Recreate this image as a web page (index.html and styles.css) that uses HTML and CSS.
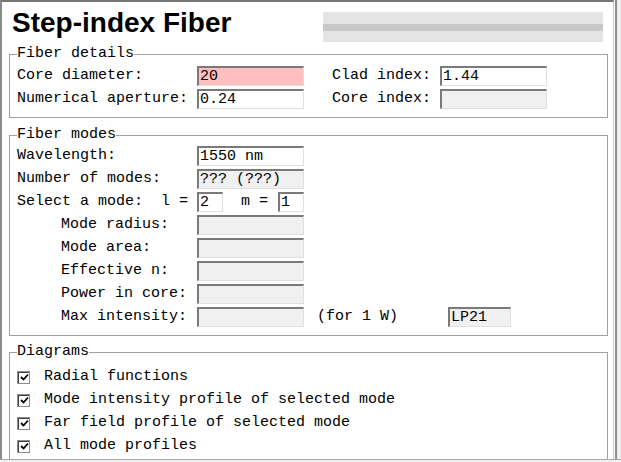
FILE: index.html
```html
<!DOCTYPE html>
<html>
<head>
<meta charset="utf-8">
<title>Step-index Fiber</title>
<link rel="stylesheet" href="styles.css">
</head>
<body>
<div class="screen">
  <div class="frame">
    <header class="head">
      <h1 class="title">Step-index Fiber</h1>
      <div class="bar"></div>
    </header>

    <fieldset class="group g-details">
      <legend class="legend">Fiber details</legend>
      <div class="details">
        <label class="lbl">Core diameter:</label>
        <input class="field warn" type="text" value="20">
        <label class="lbl lbl-right">Clad index:</label>
        <input class="field" type="text" value="1.44">
        <label class="lbl">Numerical aperture:</label>
        <input class="field" type="text" value="0.24">
        <label class="lbl lbl-right">Core index:</label>
        <input class="field off" type="text" value="" readonly>
      </div>
    </fieldset>

    <fieldset class="group g-modes">
      <legend class="legend">Fiber modes</legend>
      <div class="rows">
        <div class="row"><label class="lbl col1">Wavelength:</label><input class="field" type="text" value="1550 nm"></div>
        <div class="row"><label class="lbl col1">Number of modes:</label><input class="field off" type="text" value="??? (???)" readonly></div>
        <div class="row"><label class="lbl col1">Select a mode:  l = </label><input class="field small" type="text" value="2"><span class="lbl pre">  m = </span><input class="field small" type="text" value="1"></div>
        <div class="row"><label class="lbl col1 indent">Mode radius:</label><input class="field off" type="text" readonly></div>
        <div class="row"><label class="lbl col1 indent">Mode area:</label><input class="field off" type="text" readonly></div>
        <div class="row"><label class="lbl col1 indent">Effective n:</label><input class="field off" type="text" readonly></div>
        <div class="row"><label class="lbl col1 indent">Power in core:</label><input class="field off" type="text" readonly></div>
        <div class="row"><label class="lbl col1 indent">Max intensity:</label><input class="field off" type="text" readonly><span class="lbl note">(for 1 W)</span><input class="field off mode" type="text" value="LP21" readonly></div>
      </div>
    </fieldset>

    <fieldset class="group g-diagrams">
      <legend class="legend">Diagrams</legend>
      <div class="rows">
        <label class="row check"><span class="box"><svg width="9" height="9" viewBox="0 0 9 9"><path d="M1 4 L3.5 6.5 L8 1.5" fill="none" stroke="#000" stroke-width="1.8"/></svg></span><span class="lbl">Radial functions</span></label>
        <label class="row check"><span class="box"><svg width="9" height="9" viewBox="0 0 9 9"><path d="M1 4 L3.5 6.5 L8 1.5" fill="none" stroke="#000" stroke-width="1.8"/></svg></span><span class="lbl">Mode intensity profile of selected mode</span></label>
        <label class="row check"><span class="box"><svg width="9" height="9" viewBox="0 0 9 9"><path d="M1 4 L3.5 6.5 L8 1.5" fill="none" stroke="#000" stroke-width="1.8"/></svg></span><span class="lbl">Far field profile of selected mode</span></label>
        <label class="row check"><span class="box"><svg width="9" height="9" viewBox="0 0 9 9"><path d="M1 4 L3.5 6.5 L8 1.5" fill="none" stroke="#000" stroke-width="1.8"/></svg></span><span class="lbl">All mode profiles</span></label>
      </div>
    </fieldset>
  </div>
  <div class="gutter"></div>
  <div class="rail"></div>
</div>
</body>
</html>
```

FILE: styles.css
```css
html, body {
  margin: 0;
  padding: 0;
  background: #f0f0f0;
}

.screen {
  display: flex;
  height: 459px;
  border-bottom: 1px solid #a8a8a8;
  width: 621px;
}

.frame {
  width: 611px;
  flex: none;
  background: #ffffff;
  border-top: 2px solid #767676;
  border-left: 2px solid #8a8a8a;
  border-right: 1px solid #c8c8c8;
  overflow: hidden;
  font-family: "Liberation Mono", "Courier New", monospace;
  font-size: 15px;
  color: #000;
}

.gutter {
  width: 1px;
  background: #ffffff;
  flex: none;
}

.rail {
  width: 2px;
  background: #8e8e8e;
  flex: none;
}

.head {
  display: flex;
  justify-content: space-between;
  align-items: flex-start;
  height: 44px;
  padding: 0 10px;
}

.title {
  margin: 5px 0 0 0;
  font-family: "Liberation Sans", Arial, sans-serif;
  font-weight: bold;
  font-size: 28px;
  line-height: 32px;
}

.bar {
  width: 280px;
  height: 30px;
  margin-top: 10px;
  background: linear-gradient(#e4e4e4 0 12px, #c8c8c8 12px 19px, #e4e4e4 19px);
}

.group {
  margin: 9px 5px 0 7px;
  padding: 3px 7px 8px 7px;
  border: 1px solid #a0a0a0;
  min-width: 0;
}

.g-details {
  margin-top: 0;
  padding-top: 4px;
}

.g-diagrams {
  margin-top: 8px;
  padding-top: 7px;
}

.legend {
  padding: 0;
  line-height: 16px;
}

.details {
  display: grid;
  grid-template-columns: 180px 107px 136px 107px;
  grid-auto-rows: 20px;
  row-gap: 3px;
}

.lbl {
  line-height: 20px;
  white-space: pre;
}

.lbl-right {
  padding-left: 28px;
}

.rows {
  display: flex;
  flex-direction: column;
  gap: 3px;
}

.row {
  display: flex;
  align-items: center;
  height: 20px;
}

.col1 {
  width: 180px;
  flex: none;
}

.indent {
  padding-left: 44px;
  box-sizing: border-box;
}

.field {
  box-sizing: border-box;
  width: 107px;
  height: 20px;
  margin: 0;
  padding: 0 0 0 1px;
  border-style: solid;
  border-width: 2px 1px 1px 2px;
  border-color: #7a7a7a #e0e0e0 #e0e0e0 #7a7a7a;
  background: #ffffff;
  font-family: "Liberation Mono", "Courier New", monospace;
  font-size: 15px;
  color: #000;
  outline: none;
}

.field.warn {
  background: #ffbfbf;
}

.field.off {
  background: #f0f0f0;
}

.field.small {
  width: 26px;
}

.pre {
  width: 55px;
  flex: none;
}

.note {
  margin-left: 13px;
  width: 131px;
  flex: none;
}

.field.mode {
  width: 63px;
}

.check {
  cursor: default;
}

.box {
  box-sizing: border-box;
  width: 13px;
  height: 13px;
  margin-right: 14px;
  flex: none;
  display: flex;
  align-items: center;
  justify-content: center;
  background: #ffffff;
  border: 1px solid #8c8c8c;
  box-shadow: inset 1px 1px 0 #404040;
}

.box svg {
  display: block;
  margin: 1px 0 0 1px;
}
```
